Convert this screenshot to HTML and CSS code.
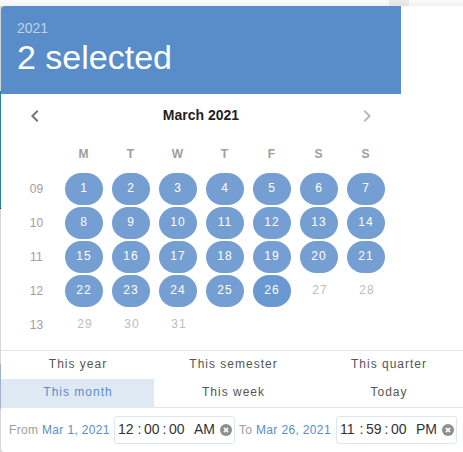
FILE: index.html
```html
<!DOCTYPE html>
<html lang="en">
<head>
<meta charset="utf-8">
<title>Date range</title>
<link rel="stylesheet" href="styles.css">
</head>
<body>
<main class="menu">
  <header class="title"><div class="year">2021</div><div class="selection">2 selected</div></header>
  <section class="picker">
    <div class="nav">
      <svg class="prev" viewBox="0 0 24 24"><path d="M15.41 16.58 10.83 12l4.58-4.59L14 6l-6 6 6 6z"/></svg>
      <strong><span class="month-name">March 2021</span></strong>
      <svg class="next" viewBox="0 0 24 24"><path d="M8.59 16.58 13.17 12 8.59 7.41 10 6l6 6-6 6z"/></svg>
    </div>
    <div class="days head"><span></span><b>M</b><b>T</b><b>W</b><b>T</b><b>F</b><b>S</b><b>S</b></div>
    <div class="days"><span>09</span><i>1</i><i>2</i><i>3</i><i>4</i><i>5</i><i>6</i><i>7</i></div>
    <div class="days"><span>10</span><i>8</i><i>9</i><i>10</i><i>11</i><i>12</i><i>13</i><i>14</i></div>
    <div class="days"><span>11</span><i>15</i><i>16</i><i>17</i><i>18</i><i>19</i><i>20</i><i>21</i></div>
    <div class="days"><span>12</span><i>22</i><i>23</i><i>24</i><i>25</i><i class="end">26</i><i class="off">27</i><i class="off">28</i></div>
    <div class="days"><span>13</span><i class="off">29</i><i class="off">30</i><i class="off">31</i></div>
  </section>
  <section class="presets">
    <span>This year</span><span>This semester</span><span>This quarter</span>
    <span class="active">This month</span><span>This week</span><span>Today</span>
  </section>
  <footer class="range">
    <span class="label from">From</span><span class="date date-from">Mar 1, 2021</span>
    <div class="time"><span class="hour">12</span><span class="colon">:</span><span class="num">00</span><span class="colon">:</span><span class="num">00</span><span class="period">AM</span><svg viewBox="0 0 12 12"><circle cx="6" cy="6" r="6"/><path d="m3.9 3.9 4.2 4.2m0-4.2L3.9 8.1"/></svg></div>
    <span class="label to">To</span><span class="date date-to">Mar 26, 2021</span>
    <div class="time"><span class="hour">11</span><span class="colon">:</span><span class="num">59</span><span class="colon">:</span><span class="num">00</span><span class="period">PM</span><svg viewBox="0 0 12 12"><circle cx="6" cy="6" r="6"/><path d="m3.9 3.9 4.2 4.2m0-4.2L3.9 8.1"/></svg></div>
  </footer>
</main>
</body>
</html>
```
FILE: styles.css
```css
* { box-sizing: border-box; }
body {
  margin: 0;
  padding: 6px 0 0 1px;
  width: 463px;
  height: 452px;
  overflow: hidden;
  font-family: "Liberation Sans", Arial, sans-serif;
  background:
    linear-gradient(rgba(0,0,0,0), rgba(0,0,0,.045)) 0 0 / 463px 6px no-repeat,
    linear-gradient(#ebebeb, #ebebeb) 389px 0 / 20px 6px no-repeat,
    linear-gradient(#fcfcfc, #fcfcfc) 0 0 / 463px 6px no-repeat,
    linear-gradient(#d5d5d5 91px, #24819a 91px, #24819a 208px, #333 208px, #333 209px, #d5d5d5 209px, #d5d5d5 364px, #a1b0d0 364px, #a1b0d0 409px, #d5d5d5 409px);
}
.menu { height: 446px; background: #fff; border-radius: 4px 0 0 4px; overflow: hidden; }
.title { width: 400px; height: 88px; padding: 14px 16px; background: #588dc9; color: #fff; }
.year { font-size: 14px; line-height: 16px; opacity: .6; }
.selection { font-size: 34px; line-height: 40px; margin-top: 1px; white-space: nowrap; }
.picker { width: 400px; height: 256px; padding: 0 11px 0 12px; }
.nav { height: 44px; display: flex; align-items: center; justify-content: space-between; padding: 0 11px 0 10px; }
.nav svg { width: 24px; height: 24px; fill: #757575; }
.nav .next { fill: #b9b9b9; }
.nav strong { font-size: 14px; color: #1f1f1f; padding-bottom: 2px; }
.days { height: 34px; display: grid; grid-template-columns: 47px repeat(7, 47px); align-items: center; justify-items: center; font-size: 12px; }
.head { height: 34px; padding-bottom: 3px; }
.days b { color: #9e9e9e; }
.days span { color: #9e9e9e; font-size: 12px; letter-spacing: .2px; }
.days i { width: 38px; height: 32px; border-radius: 16px; background: #759fd2; color: #fff; font-style: normal; line-height: 30px; text-align: center; letter-spacing: 1.05px; padding-left: 1px; }
.days .end { background: #6999d0; }
.days .off { background: none; color: #bdbdbd; padding-left: 3px; }
.presets { display: grid; grid-template-columns: 153px 158px 153px; grid-template-rows: 28px 29px; height: 58px; width: 464px; border: solid #dfe8f0; border-width: 1px 0; font-size: 12px; letter-spacing: 1px; color: #555; text-align: center; line-height: 27px; }
.presets span { padding-left: 1px; }
.presets .active { background: #dfe9f4; color: #588dc9; }
.range { display: flex; align-items: center; height: 44px; font-size: 12px; letter-spacing: .3px; white-space: nowrap; }
.label { color: #9e9e9e; }
.from { width: 33px; margin-left: 8px; }
.date { color: #588dc9; letter-spacing: .35px; }
.date-from { width: 72px; }
.to { width: 17px; margin-left: 4px; }
.date-to { width: 80px; }
.time { flex: none; width: 121px; height: 28px; border: 1px solid #dfe6ed; border-radius: 3px; display: flex; align-items: center; padding: 0 0 2px 3px; font-size: 14px; letter-spacing: 0; color: #333; }
.hour { width: 17px; }
.num { width: 16px; }
.colon { width: 9px; text-align: center; }
.period { width: 25px; margin-left: 9px; }
.time svg { flex: none; width: 12px; height: 12px; margin: 2px 0 0 1px; fill: #8f8f8f; stroke: none; }
.time path { stroke: #fff; stroke-width: 1.5; }
```
